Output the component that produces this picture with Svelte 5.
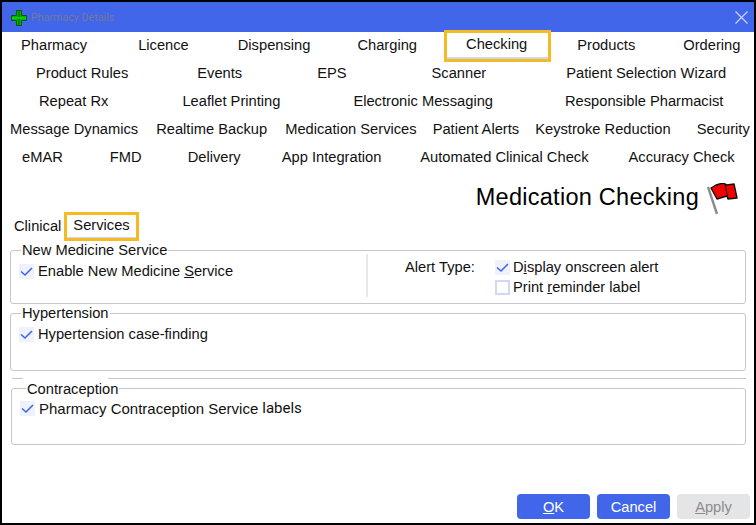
<script>
  const tabRows = [
    [['Pharmacy', 21], ['Licence', 51], ['Dispensing', 49], ['Charging', 47], ['Checking', 49, true], ['Products', 50], ['Ordering', 48]],
    [['Product Rules', 36], ['Events', 69], ['EPS', 75], ['Scanner', 85], ['Patient Selection Wizard', 80]],
    [['Repeat Rx', 39], ['Leaflet Printing', 74], ['Electronic Messaging', 73], ['Responsible Pharmacist', 72]],
    [['Message Dynamics', 10], ['Realtime Backup', 18], ['Medication Services', 18], ['Patient Alerts', 16], ['Keystroke Reduction', 16], ['Security', 26]],
    [['eMAR', 22], ['FMD', 47], ['Delivery', 46], ['App Integration', 41], ['Automated Clinical Check', 39], ['Accuracy Check', 40]]
  ];
</script>

{#snippet tick()}
  <span class="check on"><svg viewBox="0 0 15 15"><path d="M2 7.500l4 3.500 7-7" /></svg></span>
{/snippet}

<div class="window">
  <header class="titlebar">
    <svg class="app-icon" viewBox="0 0 16 16">
      <path d="M5.500.5h5v5h5v5h-5v5h-5v-5h-5v-5h5z" fill="#00b400" stroke="#04560a" />
      <path d="M8 1v14" stroke="#067a10" stroke-width="1.500" />
      <path d="M1 8h14" stroke="#10d810" stroke-width="1.500" />
    </svg>
    <span class="title">Pharmacy Details</span>
    <svg class="close" viewBox="0 0 13 13">
      <path d="M.5.5l12 12M12.500.5l-12 12" stroke="#c9d3f7" stroke-width="1.200" fill="none" />
    </svg>
  </header>

  <nav class="tabs">
    {#each tabRows as row}
      <div class="tab-row">
        {#each row as [name, gap, active]}
          <span class="tab" class:active style:margin-left="{gap}px">{name}</span>
        {/each}
      </div>
    {/each}
  </nav>

  <div class="heading">
    <span>Medication Checking</span>
    <svg class="flag" viewBox="0 0 32 32">
      <path d="M1 4l9 27" stroke="#8c8c8c" stroke-width="2.400" fill="none" />
      <path d="M4 5l5-3 7-2 4 2 7-1 3 14-9 1-1-3-10 3z" fill="#f20000" stroke="#111" stroke-width="1.400" stroke-linejoin="round" />
      <path d="M18 1l3 15" stroke="#111" stroke-width="1" />
    </svg>
  </div>

  <div class="subtabs">
    <span class="subtab">Clinical</span>
    <span class="subtab active">Services</span>
  </div>

  <section class="group nms">
    <span class="legend">New Medicine Service</span>
    <div class="nms-left">
      <div class="check-row">{@render tick()}Enable New Medicine <u>S</u>ervice</div>
    </div>
    <div class="nms-right">
      <span class="alert-label">Alert Type:</span>
      <div>
        <div class="check-row">{@render tick()}D<u>i</u>splay onscreen alert</div>
        <div class="check-row"><span class="check off"></span>Print <u>r</u>eminder label</div>
      </div>
    </div>
  </section>

  <section class="group hyper">
    <span class="legend">Hypertension</span>
    <div class="check-row">{@render tick()}Hypertension case-finding</div>
  </section>

  <div class="rule"></div>

  <section class="group contra">
    <span class="legend">Contraception</span>
    <div class="check-row">{@render tick()}<span>Pharmacy Contraception Service</span><span class="labels">labels</span></div>
  </section>

  <footer class="actions">
    <button class="primary"><u>O</u>K</button>
    <button class="primary">Cancel</button>
    <button class="disabled"><u>A</u>pply</button>
  </footer>
</div>

<style>
  :global(body) {
    margin: 0;
    background: #000;
  }

  .window {
    box-sizing: border-box;
    display: flex;
    flex-direction: column;
    width: 756px;
    height: 525px;
    background: #fff;
    border: 2px solid #000;
    font-family: "Liberation Sans", Arial, sans-serif;
    font-size: 14.7px;
    color: #111;
    overflow: hidden;
  }

  .titlebar {
    display: flex;
    align-items: center;
    flex: none;
    height: 30px;
    padding: 0 6px 0 9px;
    background: #4166e9;
  }

  .app-icon {
    width: 16px;
    height: 16px;
    margin-top: 2px;
  }

  .title {
    margin-left: 4px;
    font-family: Roboto, sans-serif;
    font-size: 10.7px;
    color: #6f7a9c;
  }

  .close {
    width: 13px;
    height: 13px;
    margin-left: auto;
  }

  .tabs {
    margin-left: -2px;
  }

  .tab-row {
    display: flex;
    height: 28px;
    line-height: 26px;
    white-space: nowrap;
  }

  .tab {
    position: relative;
  }

  .tab.active {
    line-height: 24px;
  }

  .tab.active::after {
    content: "";
    position: absolute;
    inset: -2px -24px -2px -22px;
    border: 3px solid #f6bb22;
    box-shadow: inset 0 -2px 0 #cdd6f2;
  }

  .heading {
    box-sizing: border-box;
    display: flex;
    justify-content: flex-end;
    align-items: center;
    height: 40px;
    padding: 10px 15px 0 0;
    font-size: 23.5px;
    letter-spacing: .27px;
    color: #000;
  }

  .flag {
    flex: none;
    width: 32px;
    height: 32px;
    margin: 4px 0 0 8px;
  }

  .subtabs {
    display: flex;
    align-items: center;
    height: 28px;
    padding-left: 12px;
  }

  .subtab.active {
    margin-left: 3px;
    padding: 2px 6px 5px 6px;
    border: 3px solid #f6bb22;
    box-shadow: inset 0 -1px 0 #cdd6f2;
  }

  .group {
    position: relative;
    box-sizing: border-box;
    margin: 0 8px;
    border: 1px solid #c6c6cc;
    border-radius: 3px;
  }

  .legend {
    position: absolute;
    top: -9px;
    left: 10px;
    padding: 0 1px;
    line-height: 16px;
    background: #fff;
  }

  .check-row {
    display: flex;
    align-items: center;
    height: 20px;
    white-space: pre;
  }

  .check {
    display: flex;
    flex: none;
    box-sizing: border-box;
    width: 15px;
    height: 15px;
    margin-right: 4px;
  }

  .check.on {
    background: #eff2fd;
  }

  .check.off {
    border: 2px solid #ced8fa;
  }

  .check svg {
    width: 15px;
    height: 15px;
    fill: none;
    stroke: #4166e9;
    stroke-width: 1.6;
  }

  .nms {
    display: flex;
    height: 54px;
    margin-top: 10px;
    padding: 3px 0 0 8px;
  }

  .nms-left {
    box-sizing: border-box;
    width: 349px;
    height: 43px;
    padding-top: 7px;
    border-right: 2px solid #e8e8e8;
  }

  .nms-right {
    display: flex;
    margin-left: 37px;
    padding-top: 3px;
  }

  .nms-right .check {
    margin-right: 3px;
  }

  .alert-label {
    width: 90px;
    line-height: 20px;
  }

  .hyper {
    height: 58px;
    margin-top: 9px;
    padding: 10px 0 0 8px;
  }

  .rule {
    height: 1px;
    margin: 7px 8px 0 10px;
    background: linear-gradient(to right, #c6c6cc 11px, transparent 11px, transparent 96px, #c6c6cc 96px);
  }

  .contra {
    height: 57px;
    margin: 9px 8px 0 9px;
    padding: 9px 0 0 8px;
    font-size: 15px;
  }

  .contra .legend {
    top: -8px;
    left: 14px;
    font-size: 14.7px;
  }

  .labels {
    margin-left: 4px;
    font-family: Roboto, sans-serif;
  }

  .actions {
    display: flex;
    justify-content: flex-end;
    gap: 7px;
    margin-top: auto;
    padding: 0 4px 4px 0;
  }

  button {
    width: 73px;
    height: 25px;
    padding: 0;
    border: none;
    border-radius: 4px;
    font: inherit;
  }

  .primary {
    background: #4166e9;
    color: #fff;
  }

  .disabled {
    background: #e4e5e7;
    color: #8c8c8c;
  }
</style>
